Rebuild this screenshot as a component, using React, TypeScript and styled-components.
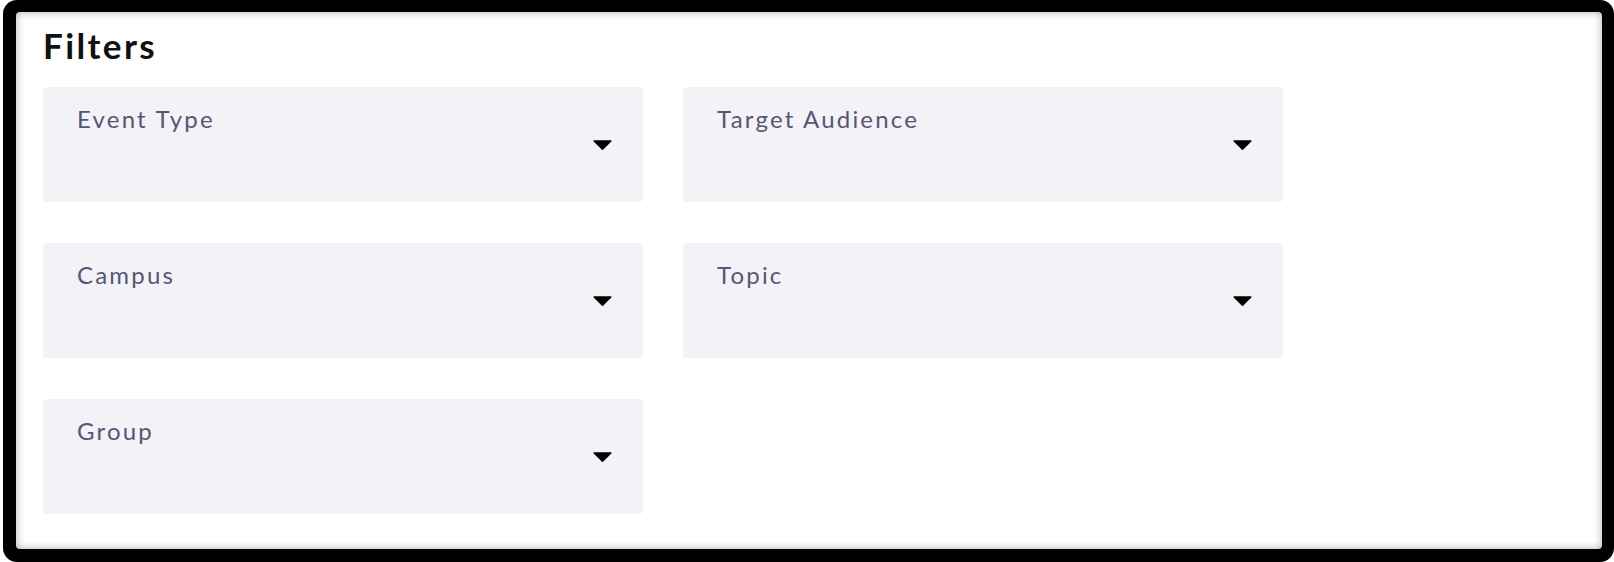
import React from "react";
import styled, { createGlobalStyle } from "styled-components";

const GlobalStyle = createGlobalStyle`
  html, body {
    margin: 0;
    padding: 0;
    background: #fff;
  }
  body {
    font-family: Lato, "Open Sans", "DejaVu Sans", sans-serif;
  }
`;

const Frame = styled.div`
  box-sizing: border-box;
  height: 562px;
  margin-left: 3px;
  padding: 12px 12px 13px 13px;
  background: #000;
  border-radius: 14px;
`;

const Panel = styled.section`
  box-sizing: border-box;
  height: 100%;
  padding: 12px 27px 0 27px;
  background: #fff;
  border-radius: 4px;
  box-shadow: inset 0 0 9px rgba(0, 0, 0, 0.32);
`;

const Title = styled.h2`
  margin: 0 0 21px 0;
  font-size: 35px;
  line-height: 42px;
  font-weight: 700;
  letter-spacing: 2.4px;
  color: #111;
`;

const FilterGrid = styled.div`
  display: grid;
  grid-template-columns: repeat(2, 600px);
  grid-auto-rows: 115px;
  column-gap: 40px;
  row-gap: 41px;
`;

const SelectBox = styled.div`
  box-sizing: border-box;
  display: flex;
  align-items: center;
  padding: 17px 31px 0 34px;
  background: #f2f2f7;
  border-radius: 4px;
  cursor: pointer;
`;

const SelectLabel = styled.span`
  align-self: flex-start;
  font-size: 24px;
  line-height: 29px;
  letter-spacing: 2.2px;
  color: #555776;
`;

const Caret = styled.svg`
  margin-left: auto;
  margin-top: -17px;
  width: 19px;
  height: 10px;
  flex-shrink: 0;
`;

type FilterSelectProps = {
  label: string;
};

function FilterSelect({ label }: FilterSelectProps) {
  return (
    <SelectBox>
      <SelectLabel>{label}</SelectLabel>
      <Caret viewBox="0 0 19 10">
        <path
          d="M1.2 1 L17.8 1 L9.5 9.2 Z"
          fill="#000"
          stroke="#000"
          strokeWidth="1.6"
          strokeLinejoin="round"
        />
      </Caret>
    </SelectBox>
  );
}

const filters = ["Event Type", "Target Audience", "Campus", "Topic", "Group"];

export default function App() {
  return (
    <>
      <GlobalStyle />
      <Frame>
        <Panel>
          <Title>Filters</Title>
          <FilterGrid>
            {filters.map((f) => (
              <FilterSelect key={f} label={f} />
            ))}
          </FilterGrid>
        </Panel>
      </Frame>
    </>
  );
}
